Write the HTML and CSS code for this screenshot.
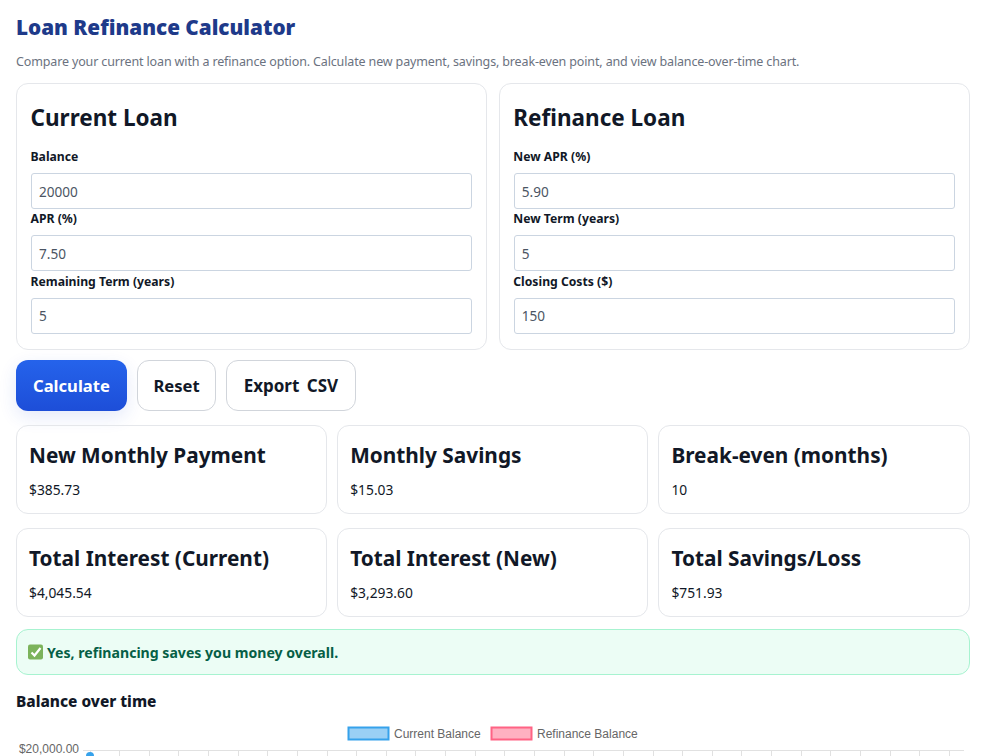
FILE: index.html
```html
<!DOCTYPE html>
<html lang="en">
<head>
<meta charset="utf-8">
<title>Loan Refinance Calculator</title>
<link rel="stylesheet" href="styles.css">
</head>
<body>
<main class="page">
  <h1 class="title">Loan Refinance Calculator</h1>
  <p class="intro">Compare your current loan with a refinance option. Calculate new payment, savings, break-even point, and view balance-over-time chart.</p>
  <section class="forms">
    <div class="card">
      <h2>Current Loan</h2>
      <label class="lbl first">Balance</label>
      <input class="field" value="20000">
      <label class="lbl">APR (%)</label>
      <input class="field" value="7.50">
      <label class="lbl">Remaining Term (years)</label>
      <input class="field" value="5">
    </div>
    <div class="card">
      <h2>Refinance Loan</h2>
      <label class="lbl first">New APR (%)</label>
      <input class="field" value="5.90">
      <label class="lbl">New Term (years)</label>
      <input class="field" value="5">
      <label class="lbl">Closing Costs ($)</label>
      <input class="field" value="150">
    </div>
  </section>
  <div class="actions">
    <button class="btn primary">Calculate</button>
    <button class="btn narrow">Reset</button>
    <button class="btn wide">Export CSV</button>
  </div>
  <section class="stats">
    <div class="stat"><h3>New Monthly Payment</h3><p>$385.73</p></div>
    <div class="stat"><h3>Monthly Savings</h3><p>$15.03</p></div>
    <div class="stat"><h3>Break-even (months)</h3><p>10</p></div>
    <div class="stat"><h3>Total Interest (Current)</h3><p>$4,045.54</p></div>
    <div class="stat"><h3>Total Interest (New)</h3><p>$3,293.60</p></div>
    <div class="stat"><h3>Total Savings/Loss</h3><p>$751.93</p></div>
  </section>
  <div class="verdict"><svg class="check" viewBox="0 0 16 16" aria-hidden="true"><rect width="15" height="15" y="0.5" rx="2" fill="#7cb35b"/><path d="M3.5 8.5l3 3 6-7.5" fill="none" stroke="#fff" stroke-width="2.2"/></svg>Yes, refinancing saves you money overall.</div>
  <h4 class="chart-title">Balance over time</h4>
  <svg class="chart" viewBox="0 0 954 60" aria-label="Balance chart">
    <rect x="332.500" y="5.500" width="40" height="12" fill="#9ad0f5" stroke="#36a2eb" stroke-width="2"/>
    <text class="legend" x="378" y="15.500">Current Balance</text>
    <rect x="475.500" y="5.500" width="40" height="12" fill="#ffb1c1" stroke="#ff6384" stroke-width="2"/>
    <text class="legend" x="521" y="15.500">Refinance Balance</text>
    <text class="tick" x="63" y="31" text-anchor="end">$20,000.00</text>
    <path class="grid" d="M67 28.500H948M74.500 28.500V36M103.500 28.500V36M133.500 28.500V36M162.500 28.500V36M192.500 28.500V36M222.500 28.500V36M251.500 28.500V36M281.500 28.500V36M311.500 28.500V36M340.500 28.500V36M370.500 28.500V36M399.500 28.500V36M429.500 28.500V36M459.500 28.500V36M488.500 28.500V36M518.500 28.500V36M548.500 28.500V36M577.500 28.500V36M607.500 28.500V36M637.500 28.500V36M666.500 28.500V36M696.500 28.500V36M725.500 28.500V36M755.500 28.500V36M785.500 28.500V36M814.500 28.500V36M844.500 28.500V36M874.500 28.500V36M903.500 28.500V36M933.500 28.500V36"/>
    <circle cx="74" cy="34" r="4" fill="#36a2eb"/>
  </svg>
</main>
</body>
</html>
```
FILE: styles.css
```css
* { box-sizing: border-box; }
html, body { margin: 0; height: 756px; overflow: hidden; background: #fff; }
body { font-family: "Noto Sans", "Open Sans", sans-serif; color: #111827; }
.page { padding: 0 18.400px 0 16px; }
.title { margin: 0; padding-top: 13px; font-size: 20.700px; line-height: 28px; font-weight: 900; color: #1e3a8a; }
.intro { margin: 12px 0 0; font-size: 12.500px; letter-spacing: -0.140px; line-height: 18px; color: #6b7280; }
.forms { display: grid; grid-template-columns: 1fr 1fr; gap: 12px; margin-top: 12px; }
.card { border: 1px solid #e5e7eb; border-radius: 12px; padding: 14px; height: 267px; }
.card h2 { margin: 2px 0 0 -0.500px; font-size: 22.500px; line-height: 36px; font-weight: 700; color: #111827; }
.lbl { display: block; margin: 2.400px 0 8px -0.500px; font-size: 12.200px; line-height: 16px; font-weight: 700; }
.lbl.first { margin-top: 13px; margin-bottom: 8px; }
.field { display: block; width: 100%; height: 36px; border: 1px solid #cbd5e1; border-radius: 3px; padding: 0 7px; font: 13.600px "Noto Sans", sans-serif; color: #4b5563; background: #fff; }
.actions { display: flex; gap: 10px; margin-top: 10px; }
.btn { height: 51px; padding: 0 16px; border: 1px solid #d1d5db; border-radius: 12px; background: #fff; font: 700 16.600px "Noto Sans", sans-serif; color: #111827; }
.btn.primary { border: 0; padding: 0 17px; color: #fff; background: linear-gradient(180deg, #2563eb, #1d4ed8); box-shadow: 0 6px 18px rgba(29, 78, 216, 0.12); }
.btn.narrow { padding: 0 15.500px; }
.btn.wide { padding: 0 16.500px; font-size: 17px; word-spacing: 3px; }
.stats { display: grid; grid-template-columns: repeat(3, 1fr); gap: 14px 10px; margin-top: 14px; }
.stat { height: 89px; border: 1px solid #e5e7eb; border-radius: 12px; padding: 12px; }
.stat h3 { margin: 1px 0 0; font-size: 20.800px; line-height: 33px; font-weight: 700; }
.stat p { margin: 8px 0 0; font-size: 13.800px; line-height: 20px; }
.verdict { display: flex; align-items: center; gap: 3px; height: 46px; margin-top: 12px; padding: 0 11px; border: 1px solid #a7f3d0; border-radius: 12px; background: #ecfdf5; color: #065f46; font-size: 14.100px; font-weight: 700; }
.check { width: 16px; height: 16px; }
.chart-title { margin: 17px 0 0; font-size: 15.400px; line-height: 20px; font-weight: 800; color: #111827; }
.chart { display: block; width: 954px; height: 60px; margin-top: 10px; }
.legend, .tick { font-family: "Liberation Sans", Arial, sans-serif; font-size: 12px; fill: #666; }
.grid { fill: none; stroke: #e1e1e1; stroke-width: 1; }
```
